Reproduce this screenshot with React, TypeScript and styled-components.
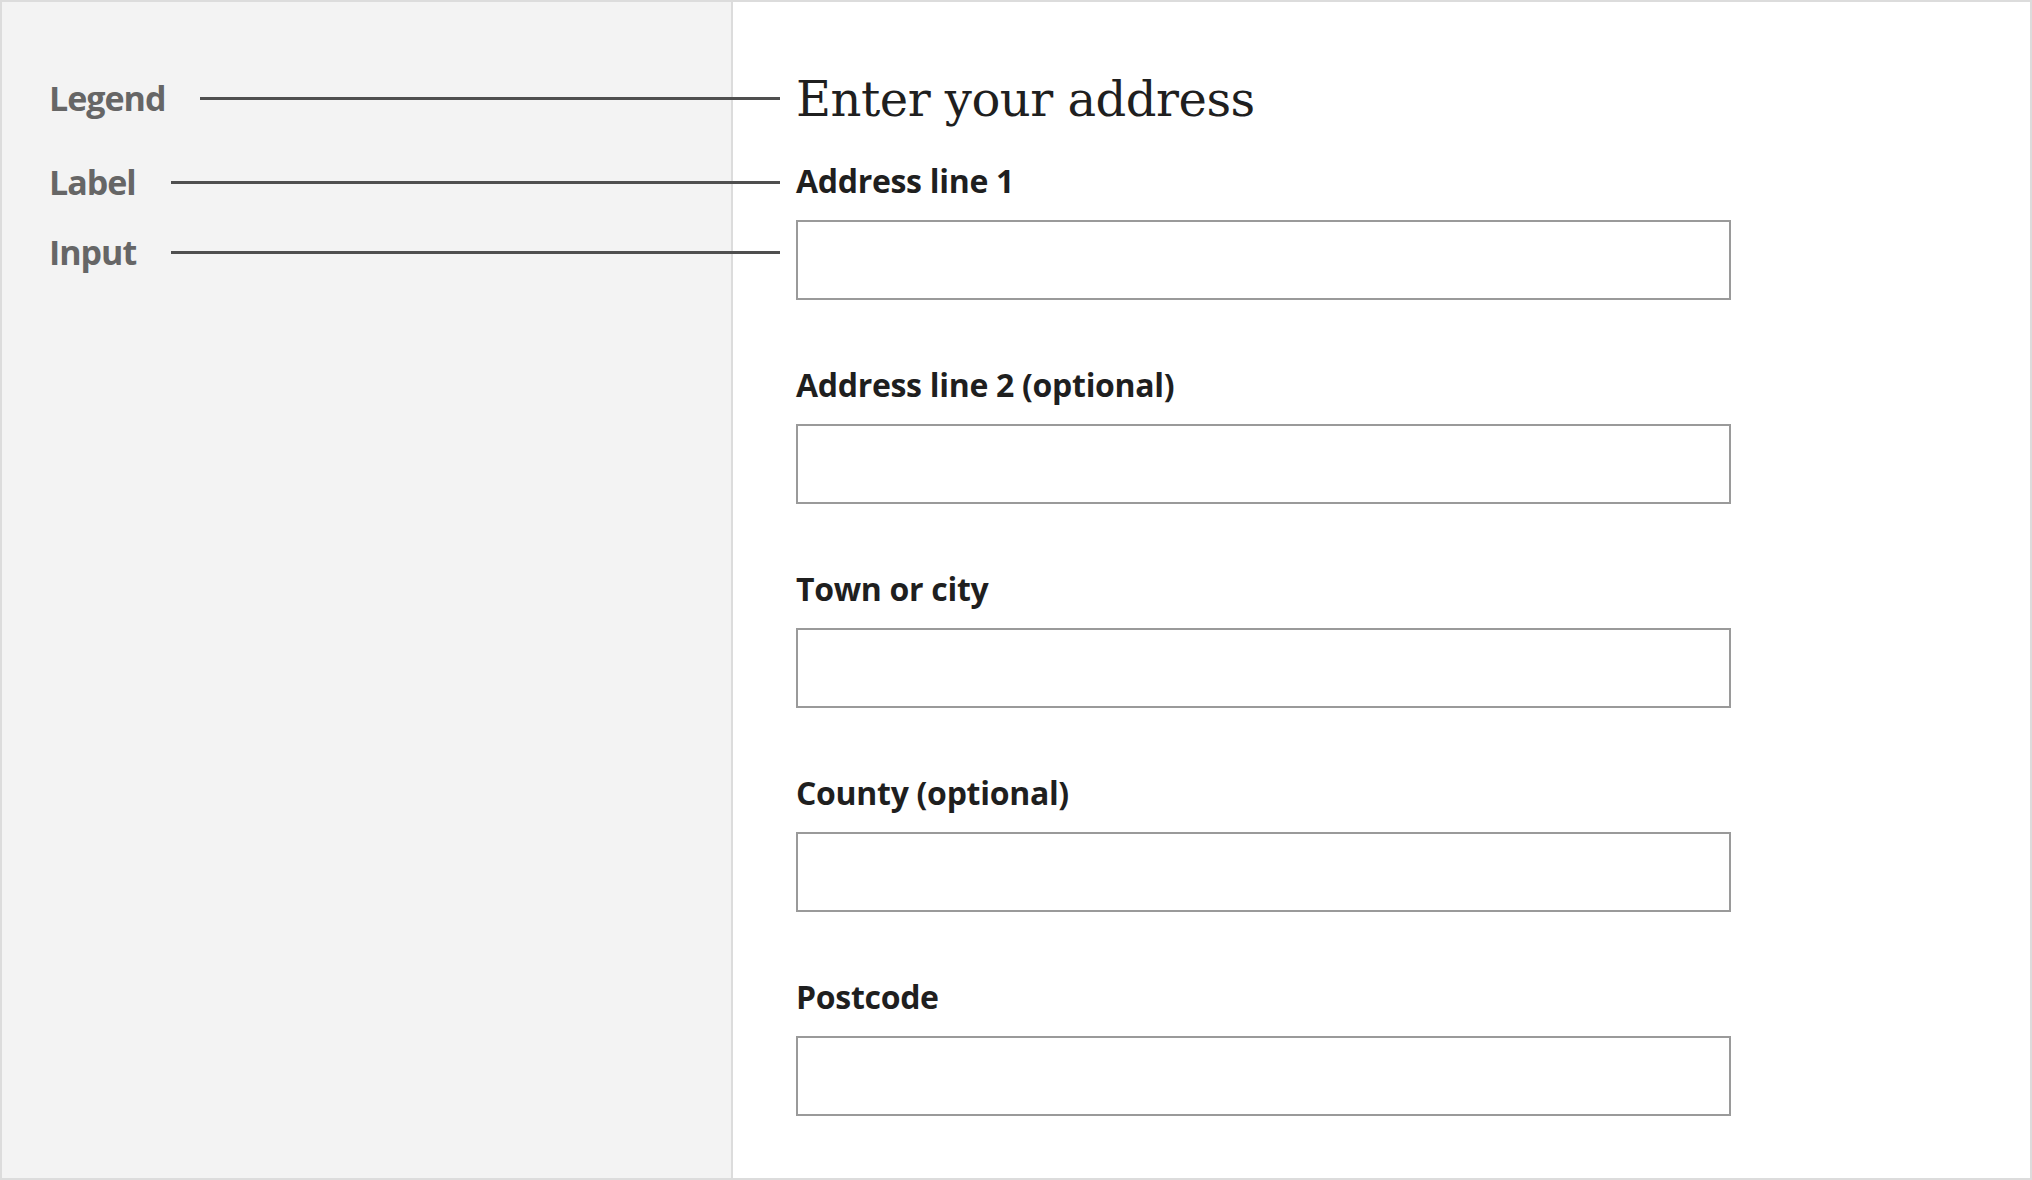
import styled, { createGlobalStyle } from "styled-components"

const GlobalStyle = createGlobalStyle`
  html, body {
    margin: 0;
    padding: 0;
    background: #fff;
  }
  * {
    box-sizing: border-box;
  }
`

const Frame = styled.div`
  width: 2032px;
  height: 1180px;
  border: 2px solid #dcdcdc;
  background: #fff;
  display: grid;
  grid-template-columns: 731px 1fr;
  overflow: hidden;
`

const Notes = styled.aside`
  background: #f3f3f3;
  border-right: 2px solid #dcdcdc;
  padding: 79px 0 0 47px;
  display: flex;
  flex-direction: column;
`

const Note = styled.div<{ $top: number }>`
  display: flex;
  align-items: center;
  height: 34px;
  margin-top: ${p => p.$top}px;
  margin-right: -49px;
`

const NoteText = styled.span`
  font-family: "Open Sans", "Liberation Sans", sans-serif;
  font-weight: 700;
  font-size: 34px;
  line-height: 34px;
  letter-spacing: -1px;
  color: #666;
`

const Leader = styled.div`
  flex: 1;
  height: 3px;
  margin-left: 35px;
  background: #4f4f4f;
`

const Form = styled.form`
  padding: 69px 0 0 63px;
  display: flex;
  flex-direction: column;
`

const Legend = styled.h1`
  margin: 0 0 34px;
  font-family: "DejaVu Serif", "Liberation Serif", serif;
  font-weight: 400;
  font-size: 48px;
  line-height: 56px;
  letter-spacing: -0.5px;
  color: #1f1f1f;
`

const Field = styled.div`
  display: flex;
  flex-direction: column;
  margin-bottom: 65px;
`

const Label = styled.label`
  font-family: "Open Sans", Lato, sans-serif;
  font-weight: 700;
  font-size: 32px;
  line-height: 40px;
  letter-spacing: -0.3px;
  color: #1f1f1f;
  margin-bottom: 19px;
`

const Input = styled.input`
  width: 935px;
  height: 80px;
  border: 2px solid #9a9a9a;
  border-radius: 0;
  background: #fff;
  padding: 0 16px;
  font-family: "Open Sans", sans-serif;
  font-size: 30px;
  outline: none;
`

const fields = [
  { id: "line1", label: "Address line 1" },
  { id: "line2", label: "Address line 2 (optional)" },
  { id: "town", label: "Town or city" },
  { id: "county", label: "County (optional)" },
  { id: "postcode", label: "Postcode" },
]

const App = () => (
  <>
    <GlobalStyle />
    <Frame>
      <Notes>
        <Note $top={0}>
          <NoteText>Legend</NoteText>
          <Leader />
        </Note>
        <Note $top={50}>
          <NoteText>Label</NoteText>
          <Leader />
        </Note>
        <Note $top={36}>
          <NoteText>Input</NoteText>
          <Leader />
        </Note>
      </Notes>
      <Form>
        <Legend>Enter your address</Legend>
        {fields.map(f => (
          <Field key={f.id}>
            <Label htmlFor={f.id}>{f.label}</Label>
            <Input id={f.id} type="text" />
          </Field>
        ))}
      </Form>
    </Frame>
  </>
)

export default App
